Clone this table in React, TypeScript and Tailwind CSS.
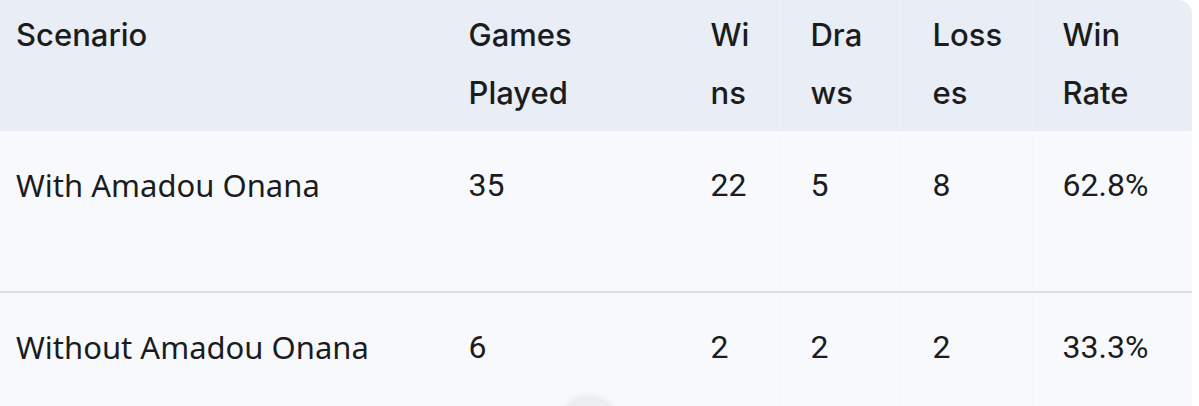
import React from "react";

const head = "font-['Inter','Roboto',sans-serif] font-medium text-[31px] leading-[58px] text-[#1b1c1d] text-left whitespace-nowrap";
const num = "font-['Roboto','Inter',sans-serif] text-[32px] leading-[58px] text-[#1b1c1d]";
const name = "font-['Noto_Sans','Roboto',sans-serif] text-[31px] leading-[58px] text-[#1b1c1d]";

const rows = [
  { s: "With Amadou Onana", g: "35", w: "22", d: "5", l: "8", r: "62.8%", h: "h-[161px]", border: true },
  { s: "Without Amadou Onana", g: "6", w: "2", d: "2", l: "2", r: "33.3%", h: "h-[114px]", border: false },
];

export default function App() {
  return (
    <div className="relative w-[1199px] h-[406px] overflow-hidden bg-white">
      <div className="w-[1192px] rounded-tr-[14px] overflow-hidden">
        <table className="w-[1192px] table-fixed border-collapse">
          <colgroup>
            <col className="w-[438px]" />
            <col className="w-[244px]" />
            <col className="w-[98px]" />
            <col className="w-[120px]" />
            <col className="w-[132px]" />
            <col className="w-[160px]" />
          </colgroup>
          <thead>
            <tr className="bg-[#e9edf5] h-[131px] align-top">
              <th className={`${head} pl-4 pt-[6px] border-r border-[#edf0f6]`}>Scenario</th>
              <th className={`${head} pl-[30px] pt-[6px] border-r border-[#edf0f6]`}>Games<br />Played</th>
              <th className={`${head} pl-[28px] pt-[6px] border-r border-[#edf0f6]`}>Wi<br />ns</th>
              <th className={`${head} pl-[30px] pt-[6px] border-r border-[#edf0f6]`}>Dra<br />ws</th>
              <th className={`${head} pl-[32px] pt-[6px] border-r border-[#edf0f6]`}>Loss<br />es</th>
              <th className={`${head} pl-[30px] pt-[6px]`}>Win<br />Rate</th>
            </tr>
          </thead>
          <tbody>
            {rows.map((r) => (
              <tr key={r.s} className={`bg-[#f8f9fc] ${r.h} align-top ${r.border ? "border-b-2 border-[#dcdde2]" : ""}`}>
                <td className={`${name} pl-4 pt-[25px] border-r border-[#f5f6f9]`}>{r.s}</td>
                <td className={`${num} pl-[30px] pt-[25px] border-r border-[#f5f6f9]`}>{r.g}</td>
                <td className={`${num} pl-[28px] pt-[25px] border-r border-[#f5f6f9]`}>{r.w}</td>
                <td className={`${num} pl-[30px] pt-[25px] border-r border-[#f5f6f9]`}>{r.d}</td>
                <td className={`${num} pl-[32px] pt-[25px] border-r border-[#f5f6f9]`}>{r.l}</td>
                <td className={`${num} pl-[30px] pt-[25px]`}>{r.r}</td>
              </tr>
            ))}
          </tbody>
        </table>
      </div>
      <div className="absolute left-[560px] top-[399px] w-[58px] h-[58px] rounded-full bg-[#eceef2] shadow-[0_-1px_8px_rgba(0,0,0,0.12)] blur-[1px]" />
    </div>
  );
}
